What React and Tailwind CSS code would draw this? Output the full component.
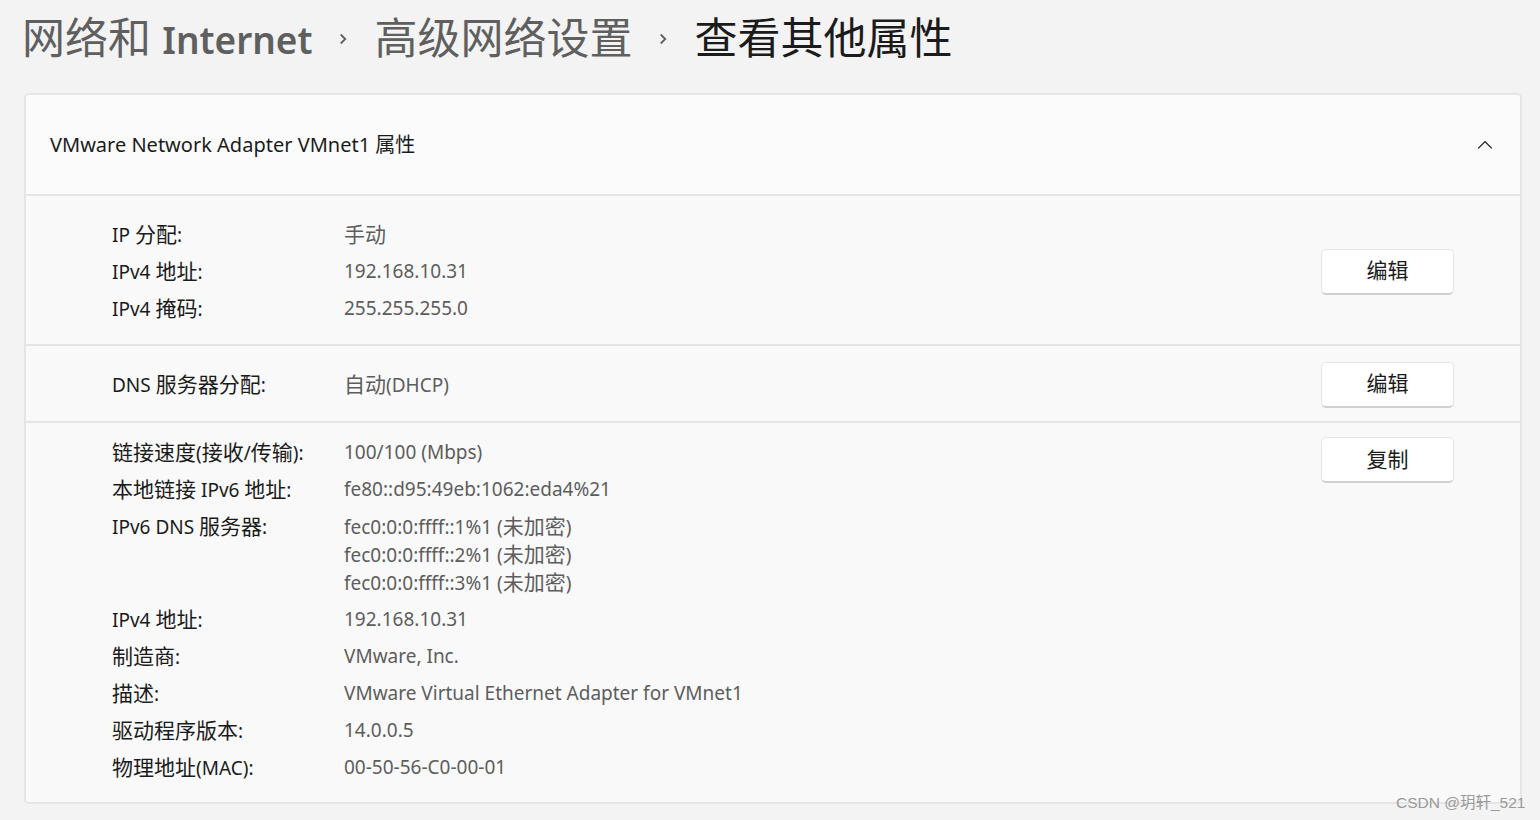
import React from "react";

const font = { fontFamily: '"Noto Sans", "Noto Sans CJK SC", sans-serif' };

// 中文字符比拉丁字符略大，单独包一层
const T = ({ children, cjk = "text-[21px] leading-none" }) => {
  const parts = String(children).split(/([\u4e00-\u9fff]+)/);
  return (
    <>
      {parts.map((p, i) =>
        /[\u4e00-\u9fff]/.test(p) ? (
          <span key={i} className={cjk}>{p}</span>
        ) : (
          <span key={i}>{p}</span>
        )
      )}
    </>
  );
};

const Chevron = () => (
  <svg width="18" height="18" viewBox="0 0 16 16" className="mx-[22px] mt-[4px]">
    <path d="M6 4 L10 8 L6 12" fill="none" stroke="#5f5f5f" strokeWidth="1.6" />
  </svg>
);

const Row = ({ label, children }) => (
  <div className="flex h-[37px] items-center leading-none">
    <div className="w-[232px] shrink-0 text-[#1b1b1b]"><T>{label}</T></div>
    <div className="text-[#5d5d5d]"><T>{children}</T></div>
  </div>
);

const EditButton = ({ text }) => (
  <button className="h-[46px] w-[133px] rounded-[5px] border border-[#e5e5e5] border-b-2 border-b-[#d0d0d0] bg-white text-[21px] text-[#1b1b1b]">
    {text}
  </button>
);

export default function App() {
  return (
    <div className="relative h-[820px] w-[1540px] overflow-hidden bg-[#f3f3f3]" style={font}>
      {/* 面包屑 */}
      <div className="flex h-[74px] items-center pl-[22px] text-[43px] leading-none">
        <span className="text-[#5f5f5f]">网络和 <span className="text-[37px] font-semibold">Internet</span></span>
        <Chevron />
        <span className="text-[#5f5f5f]">高级网络设置</span>
        <Chevron />
        <span className="text-[#1b1b1b]">查看其他属性</span>
      </div>

      <div className="ml-[24px] mr-[18px] mt-[19px] overflow-hidden rounded-[5px] border-2 border-[#e5e5e5] text-[19px]">
        <div className="flex h-[101px] items-center justify-between border-b-2 border-[#e5e5e5] bg-[#fbfbfb] pl-[24px] pr-[26px]">
          <span className="text-[20px] text-[#1b1b1b]">VMware Network Adapter VMnet1 属性</span>
          <svg width="18" height="18" viewBox="0 0 16 16">
            <path d="M2 11 L8 5 L14 11" fill="none" stroke="#1b1b1b" strokeWidth="1.2" />
          </svg>
        </div>

        <div className="flex items-center justify-between border-b-2 border-[#e5e5e5] bg-[#f9f9f9] pl-[86px] pr-[66px] pt-[20px] pb-[17px]">
          <div>
            <Row label="IP 分配:">手动</Row>
            <Row label="IPv4 地址:">192.168.10.31</Row>
            <Row label="IPv4 掩码:">255.255.255.0</Row>
          </div>
          <EditButton text="编辑" />
        </div>

        <div className="flex h-[77px] items-center justify-between border-b-2 border-[#e5e5e5] bg-[#f9f9f9] pl-[86px] pr-[66px] pt-[2px]">
          <Row label="DNS 服务器分配:">自动(DHCP)</Row>
          <EditButton text="编辑" />
        </div>

        <div className="flex items-start justify-between bg-[#f9f9f9] pl-[86px] pr-[66px] pt-[11px] pb-[16px]">
          <div>
            <Row label="链接速度(接收/传输):">100/100 (Mbps)</Row>
            <Row label="本地链接 IPv6 地址:">fe80::d95:49eb:1062:eda4%21</Row>
            <div className="flex items-start pt-[4px] pb-[5px] leading-none">
              <div className="flex h-[28px] w-[232px] shrink-0 items-center text-[#1b1b1b]"><span><T>IPv6 DNS 服务器:</T></span></div>
              <div className="text-[#5d5d5d]">
                <div className="flex h-[28px] items-center"><span><T>fec0:0:0:ffff::1%1 (未加密)</T></span></div>
                <div className="flex h-[28px] items-center"><span><T>fec0:0:0:ffff::2%1 (未加密)</T></span></div>
                <div className="flex h-[28px] items-center"><span><T>fec0:0:0:ffff::3%1 (未加密)</T></span></div>
              </div>
            </div>
            <Row label="IPv4 地址:">192.168.10.31</Row>
            <Row label="制造商:">VMware, Inc.</Row>
            <Row label="描述:">VMware Virtual Ethernet Adapter for VMnet1</Row>
            <Row label="驱动程序版本:">14.0.0.5</Row>
            <Row label="物理地址(MAC):">00-50-56-C0-00-01</Row>
          </div>
          <div className="pt-[3px]">
            <EditButton text="复制" />
          </div>
        </div>
      </div>

      <div className="absolute left-[1396px] top-[791px] text-[15.5px] text-[#9a9a9a]" style={{ fontFamily: '"Liberation Sans", "Noto Sans CJK SC", sans-serif' }}>
        CSDN @玥轩_521
      </div>
    </div>
  );
}
